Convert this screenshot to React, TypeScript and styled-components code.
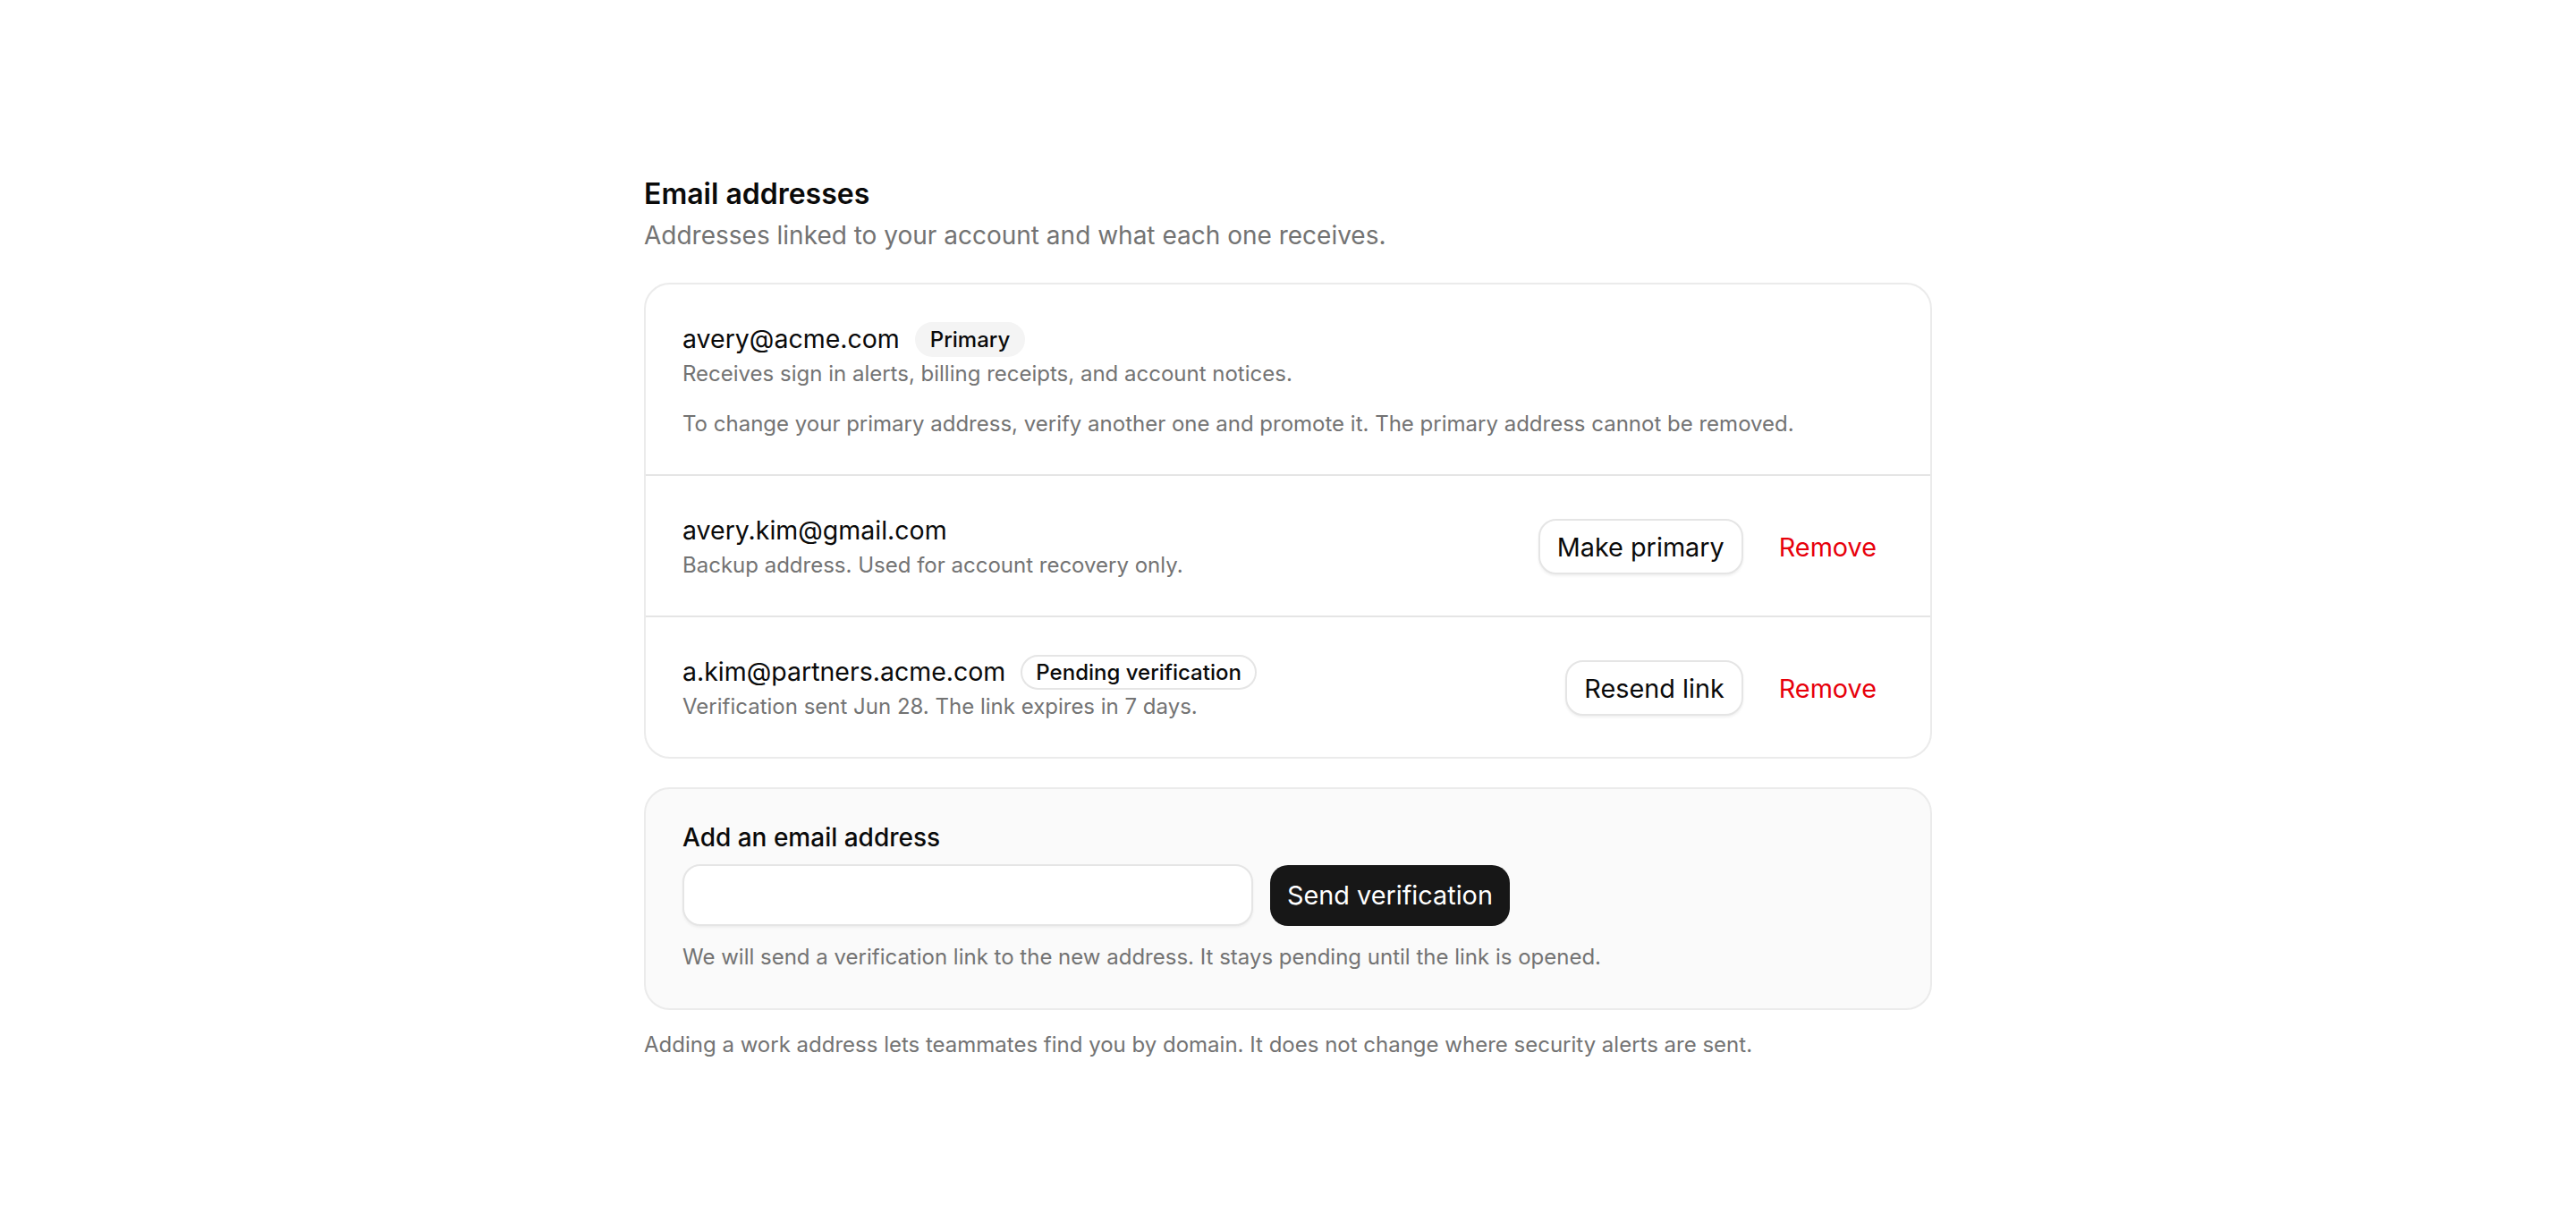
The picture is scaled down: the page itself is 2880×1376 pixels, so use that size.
import React, { useState } from "react";
import styled, { createGlobalStyle } from "styled-components";

const GlobalStyle = createGlobalStyle`
  * {
    box-sizing: border-box;
  }
  body {
    margin: 0;
    background: #ffffff;
    font-family: Inter, "Noto Sans", "Liberation Sans", sans-serif;
    color: #0a0a0a;
  }
`;

interface EmailEntry {
  address: string;
  badge?: { label: string; variant: "filled" | "outline" };
  description: string;
  note?: string;
  action?: string;
  removable: boolean;
}

const entries: EmailEntry[] = [
  {
    address: "avery@acme.com",
    badge: { label: "Primary", variant: "filled" },
    description: "Receives sign in alerts, billing receipts, and account notices.",
    note: "To change your primary address, verify another one and promote it. The primary address cannot be removed.",
    removable: false,
  },
  {
    address: "avery.kim@gmail.com",
    description: "Backup address. Used for account recovery only.",
    action: "Make primary",
    removable: true,
  },
  {
    address: "a.kim@partners.acme.com",
    badge: { label: "Pending verification", variant: "outline" },
    description: "Verification sent Jun 28. The link expires in 7 days.",
    action: "Resend link",
    removable: true,
  },
];

const App: React.FC = () => {
  const [newAddress, setNewAddress] = useState("");

  return (
    <>
      <GlobalStyle />
      <Page>
        <Section>
          <Heading>Email addresses</Heading>
          <Subtitle>Addresses linked to your account and what each one receives.</Subtitle>

          <Card>
            {entries.map((entry) => (
              <Row key={entry.address}>
                <RowInfo>
                  <EmailLine>
                    <Address>{entry.address}</Address>
                    {entry.badge && (
                      <Badge $variant={entry.badge.variant}>{entry.badge.label}</Badge>
                    )}
                  </EmailLine>
                  <Muted>{entry.description}</Muted>
                  {entry.note && <Note>{entry.note}</Note>}
                </RowInfo>
                {(entry.action || entry.removable) && (
                  <Actions>
                    {entry.action && <OutlineButton type="button">{entry.action}</OutlineButton>}
                    {entry.removable && <RemoveButton type="button">Remove</RemoveButton>}
                  </Actions>
                )}
              </Row>
            ))}
          </Card>

          <AddCard>
            <Label htmlFor="new-email">Add an email address</Label>
            <InputRow>
              <Input
                id="new-email"
                type="email"
                value={newAddress}
                onChange={(e) => setNewAddress(e.target.value)}
              />
              <SolidButton type="button">Send verification</SolidButton>
            </InputRow>
            <Help>We will send a verification link to the new address. It stays pending until the link is opened.</Help>
          </AddCard>

          <Footer>
            Adding a work address lets teammates find you by domain. It does not change where security alerts are sent.
          </Footer>
        </Section>
      </Page>
    </>
  );
};

const Page = styled.div`
  display: flex;
  justify-content: center;
  padding: 196px 0 120px;
`;

const Section = styled.section`
  width: 1440px;
  display: flex;
  flex-direction: column;
`;

const Heading = styled.h2`
  margin: 0;
  font-size: 32px;
  line-height: 42px;
  font-weight: 600;
  color: #0a0a0a;
`;

const Subtitle = styled.p`
  margin: 5px 0 0;
  font-size: 28px;
  line-height: 40px;
  color: #737373;
`;

const Card = styled.div`
  margin-top: 33px;
  background: #ffffff;
  border: 2px solid #ebebeb;
  border-radius: 29px;
  overflow: hidden;
`;

const Row = styled.div`
  display: flex;
  align-items: center;
  justify-content: space-between;
  gap: 36px;
  padding: 40px 40px 38px 41px;

  & + & {
    border-top: 2px solid #e5e5e5;
  }
`;

const RowInfo = styled.div`
  display: flex;
  flex-direction: column;
  min-width: 0;
`;

const EmailLine = styled.div`
  display: flex;
  align-items: center;
  gap: 17px;
  height: 42px;
`;

const Address = styled.span`
  font-size: 28.5px;
  line-height: 40px;
  color: #0a0a0a;
`;

const Badge = styled.span<{ $variant: "filled" | "outline" }>`
  display: inline-flex;
  align-items: center;
  height: 39px;
  padding: 0 15px;
  border-radius: 999px;
  font-size: 24px;
  font-weight: 500;
  color: #0a0a0a;
  background: ${(p) => (p.$variant === "filled" ? "#f4f4f4" : "#ffffff")};
  border: 2px solid ${(p) => (p.$variant === "filled" ? "#f4f4f4" : "#e5e5e5")};
`;

const Muted = styled.p`
  margin: 0;
  font-size: 24px;
  line-height: 36px;
  color: #737373;
`;

const Note = styled(Muted)`
  margin-top: 20px;
`;

const Actions = styled.div`
  display: flex;
  align-items: center;
  gap: 20px;
  flex-shrink: 0;
`;

const OutlineButton = styled.button`
  height: 62px;
  padding: 0 19px;
  border: 2px solid #e5e5e5;
  border-radius: 20px;
  background: #ffffff;
  box-shadow: 0 2px 3px rgba(0, 0, 0, 0.06);
  font-family: inherit;
  font-size: 28.8px;
  font-weight: 400;
  color: #0a0a0a;
  cursor: pointer;
`;

const RemoveButton = styled.button`
  height: 62px;
  padding: 0 20px;
  border: none;
  background: transparent;
  font-family: inherit;
  font-size: 28.8px;
  font-weight: 400;
  color: #e7000b;
  cursor: pointer;
`;

const AddCard = styled.div`
  margin-top: 32px;
  padding: 36px 40px 39px 41px;
  background: #fafafa;
  border: 2px solid #ebebeb;
  border-radius: 29px;
  display: flex;
  flex-direction: column;
`;

const Label = styled.label`
  font-size: 28px;
  line-height: 36px;
  font-weight: 500;
  color: #0a0a0a;
`;

const InputRow = styled.div`
  margin-top: 12px;
  display: flex;
  align-items: center;
  gap: 19px;
`;

const Input = styled.input`
  width: 638px;
  height: 69px;
  padding: 0 22px;
  border: 2px solid #e5e5e5;
  border-radius: 20px;
  background: #ffffff;
  box-shadow: 0 2px 3px rgba(0, 0, 0, 0.05);
  font-family: inherit;
  font-size: 28.8px;
  color: #0a0a0a;

  &:focus {
    outline: none;
    border-color: #a3a3a3;
  }
`;

const SolidButton = styled.button`
  height: 68px;
  padding: 0 19px;
  border: none;
  border-radius: 20px;
  background: #171717;
  font-family: inherit;
  font-size: 28.8px;
  font-weight: 400;
  color: #ffffff;
  cursor: pointer;
`;

const Help = styled(Muted)`
  margin-top: 17px;
`;

const Footer = styled(Muted)`
  margin-top: 21px;
`;

export default App;
